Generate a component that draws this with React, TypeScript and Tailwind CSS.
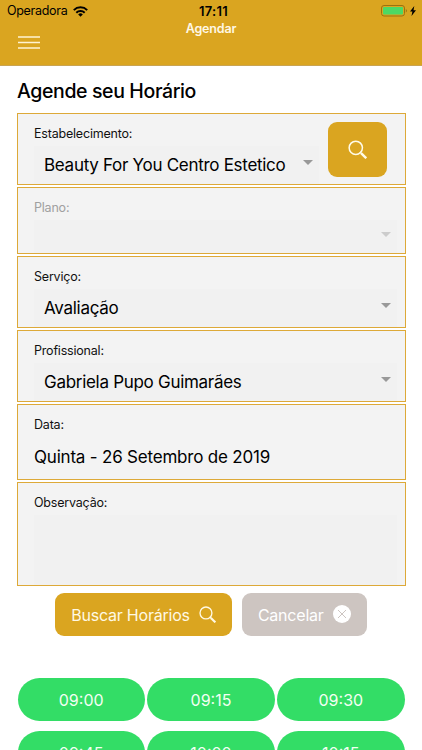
import type { ReactNode } from "react";

type FieldProps = {
  label: string;
  height: string;
  disabled?: boolean;
  children?: ReactNode;
};

const slots = ["09:00", "09:15", "09:30", "09:45", "10:00", "10:15"];

function SearchIcon({ className }: { className: string }) {
  return (
    <svg viewBox="0 0 20 20" fill="none" stroke="currentColor" className={className}>
      <circle cx="8.2" cy="8.2" r="7" strokeWidth="1.6" />
      <path d="M12.6 12.6l1.8 1.8" strokeWidth="1.6" />
      <path d="M14 14l5.2 5.2" strokeWidth="2.5" />
    </svg>
  );
}

function Field({ label, height, disabled, children }: FieldProps) {
  return (
    <div className={`flex w-full flex-col border border-[#dda938] bg-[#f3f3f3] pt-3 pr-2 pl-4 ${height}`}>
      <span className={`text-[12.5px] leading-4 tracking-[-0.2px] ${disabled ? "text-[#a0a0a0]" : "text-[#111]"}`}>{label}</span>
      {children}
    </div>
  );
}

function Select({ value, disabled }: { value?: string; disabled?: boolean }) {
  return (
    <div className="mt-1 flex min-h-0 flex-1 items-center justify-between bg-[#f1f1f1] pr-1.5 pl-2.5">
      <span className="text-[17px] leading-5 tracking-[-0.29px] whitespace-nowrap">{value}</span>
      <svg viewBox="0 0 10 5" className={`mb-[5px] h-[5px] w-2.5 ${disabled ? "text-[#ccc]" : "text-[#999]"}`}>
        <path d="M0 0h10L5 5z" fill="currentColor" />
      </svg>
    </div>
  );
}

export default function App() {
  return (
    <main className="h-[750px] w-[422px] overflow-hidden bg-white font-['Inter','Liberation_Sans',sans-serif] text-black">
      {/* Header */}
      <header className="h-[66px] border-b border-[#c9a452] bg-[#daa520]">
        <div className="grid h-[22px] grid-cols-3 items-center pr-1.5 pl-[7px]">
          <div className="flex items-center gap-1.5">
            <span className="text-[12.5px] tracking-[-0.3px]">Operadora</span>
            <svg viewBox="0 0 15 11" className="h-[11px] w-[15px]" fill="none" stroke="black" strokeWidth="2">
              <path d="M.8 4.1a9.5 9.5 0 0 1 13.4 0" />
              <path d="M3.3 6.7a6 6 0 0 1 8.4 0" />
              <path d="M5.2 8.4a3.3 3.3 0 0 1 4.6 0L7.5 10.8z" fill="black" stroke="none" />
            </svg>
          </div>
          <span className="pt-px pl-1 text-center text-[13px] font-semibold tracking-[0.3px]">17:11</span>
          <div className="flex items-center justify-end gap-[3px]">
            <svg viewBox="0 0 26 12" className="h-3 w-[26px]">
              <rect x=".5" y=".5" width="23" height="10.5" rx="2.5" fill="none" stroke="#9a7310" />
              <rect x="2" y="2" width="20" height="7.5" rx="1" fill="#4cd964" />
              <path d="M24.8 4a2 2 0 0 1 0 3.6z" fill="#9a7310" />
            </svg>
            <svg viewBox="0 0 6 10" className="h-2.5 w-1.5">
              <path d="M4.3 0L0 5.6h2.4L1.5 10 6 4.2H3.5z" />
            </svg>
          </div>
        </div>
        <h1 className="-mt-px text-center text-[12.5px] leading-4 font-semibold tracking-[-0.15px] text-[#fff8e5]">Agendar</h1>
        <button className="-mt-px ml-[18px] block text-[#fff4d2]" aria-label="Menu">
          <svg viewBox="0 0 22 13" className="h-[13px] w-[22px]" stroke="currentColor" strokeWidth="1.7">
            <path d="M0 1h22M0 6.5h22M0 12h22" />
          </svg>
        </button>
      </header>

      <section className="px-[17px] pt-[13px]">
        <h2 className="text-[19.5px] leading-6 font-medium tracking-[-0.38px]">Agende seu Horário</h2>

        {/* Form */}
        <div className="mt-2.5 flex w-[388.5px] flex-col gap-0.5">
          <div className="flex h-[72px] border border-[#dda938] bg-[#f3f3f3] pl-4">
            <div className="flex w-[285px] flex-col pt-3">
              <span className="text-[12.5px] leading-4 tracking-[-0.2px] text-[#111]">Estabelecimento:</span>
              <Select value="Beauty For You Centro Estetico" />
            </div>
            <button className="mt-2 ml-[9px] flex h-[55px] w-[59px] items-center justify-center rounded-[9px] bg-[#daa520] text-[#fffbe8]" aria-label="Buscar">
              <SearchIcon className="h-[19px] w-[19px]" />
            </button>
          </div>
          <Field label="Plano:" height="h-[67px]" disabled>
            <Select disabled />
          </Field>
          <Field label="Serviço:" height="h-[72px]">
            <Select value="Avaliação" />
          </Field>
          <Field label="Profissional:" height="h-[72px]">
            <Select value="Gabriela Pupo Guimarães" />
          </Field>
          <Field label="Data:" height="h-[76px]">
            <span className="mt-3.5 text-[17px] leading-5 tracking-[-0.2px]">Quinta - 26 Setembro de 2019</span>
          </Field>
          <Field label="Observação:" height="h-[104px]">
            <div className="mt-1 flex-1 bg-[#f1f1f1]" />
          </Field>
        </div>

        {/* Actions */}
        <div className="mt-[7px] ml-[38px] flex gap-[9.5px] text-[16px] tracking-[-0.22px]">
          <button className="flex h-[43px] w-[177px] items-center justify-center gap-[9px] rounded-[9px] bg-[#daa520] whitespace-nowrap text-[#fff9e4]">
            <span>Buscar Horários</span>
            <SearchIcon className="h-[17px] w-[17px]" />
          </button>
          <button className="flex h-[43px] w-[125.5px] items-center justify-center gap-[9px] rounded-[9px] bg-[#cdc5c1] whitespace-nowrap text-white">
            <span>Cancelar</span>
            <svg viewBox="0 0 18 18" className="mb-px h-[18px] w-[18px]">
              <circle cx="9" cy="9" r="9" fill="white" />
              <path d="M5 5l8 8M13 5l-8 8" stroke="#cdc5c1" strokeWidth="1" />
            </svg>
          </button>
        </div>

        {/* Available times */}
        <div className="mt-[42px] ml-[0.5px] grid w-[387px] grid-cols-3 gap-x-[2.5px] gap-y-2.5">
          {slots.map((slot) => (
            <button key={slot} className="h-[43px] rounded-full bg-[#33dd66] text-[16px] text-[#f2fff3]">
              {slot}
            </button>
          ))}
        </div>
      </section>
    </main>
  );
}
